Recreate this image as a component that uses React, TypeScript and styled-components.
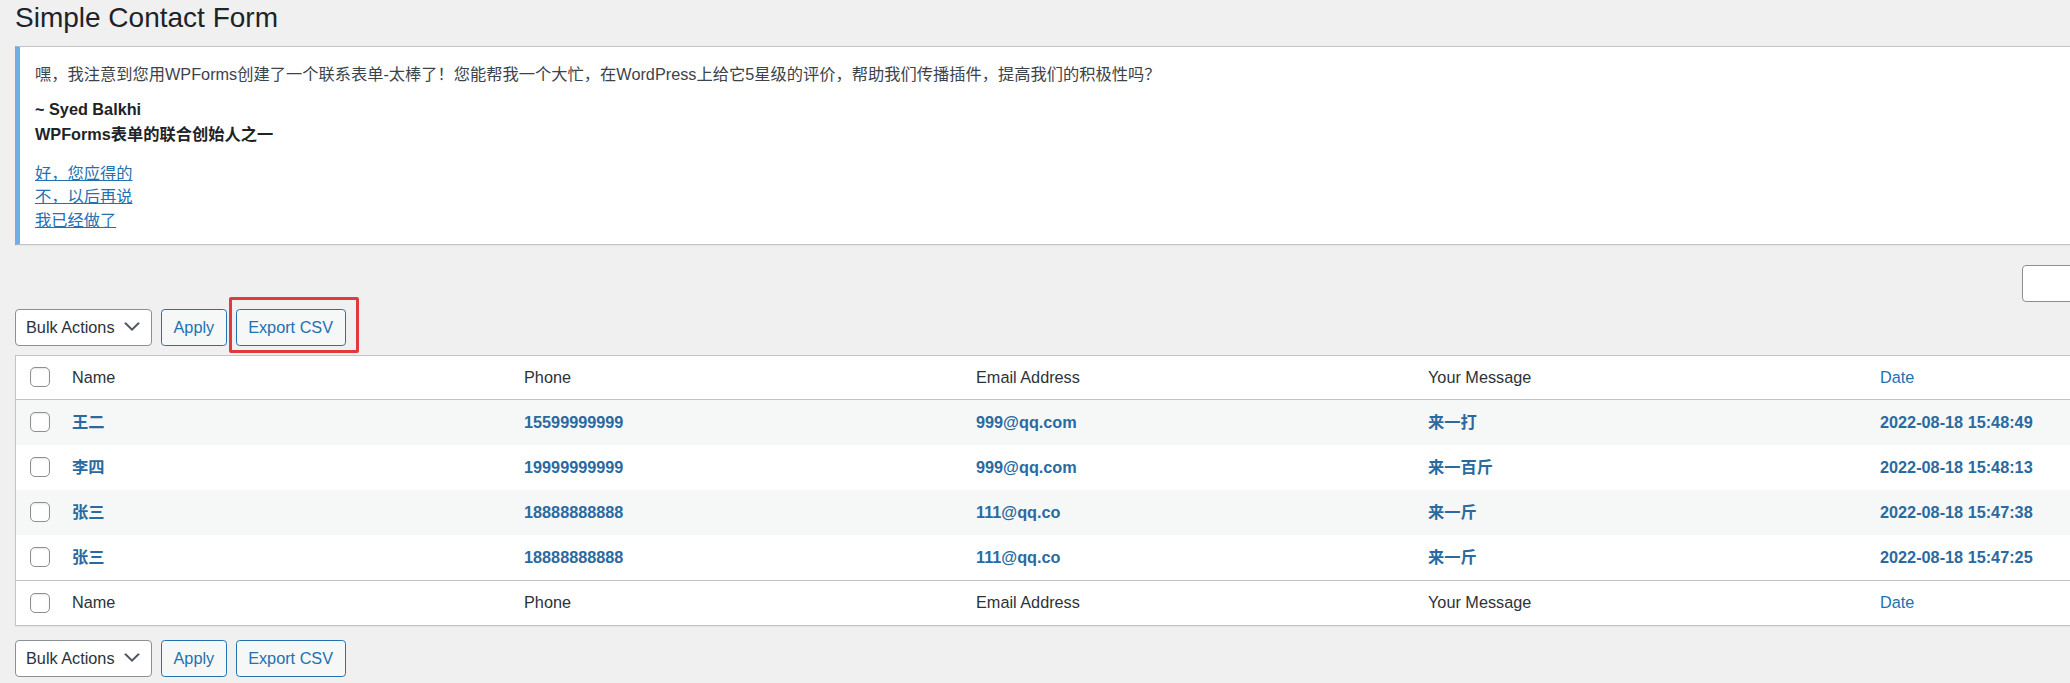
import React from "react";
import styled, { createGlobalStyle } from "styled-components";

const GlobalStyle = createGlobalStyle`
  html, body {
    margin: 0;
    padding: 0;
    overflow: hidden;
    background: #f0f0f1;
  }
  body {
    font-family: "Liberation Sans", "Noto Sans CJK SC", sans-serif;
    font-size: 16.25px;
    color: #3c434a;
  }
`;

const entries = [
  { name: "王二", phone: "15599999999", email: "999@qq.com", message: "来一打", date: "2022-08-18 15:48:49" },
  { name: "李四", phone: "19999999999", email: "999@qq.com", message: "来一百斤", date: "2022-08-18 15:48:13" },
  { name: "张三", phone: "18888888888", email: "111@qq.co", message: "来一斤", date: "2022-08-18 15:47:38" },
  { name: "张三", phone: "18888888888", email: "111@qq.co", message: "来一斤", date: "2022-08-18 15:47:25" },
];

const columns = ["Name", "Phone", "Email Address", "Your Message"];

const Wrap = styled.div`
  width: 2345px;
  padding-left: 15px;
`;

const Title = styled.h1`
  margin: 0;
  font-size: 28px;
  line-height: 36px;
  font-weight: 400;
  color: #1d2327;
`;

const Notice = styled.div`
  margin-top: 9.5px;
  padding: 0 15px;
  background: #fff;
  border: 1px solid #c3c4c7;
  border-left: 5px solid #72aee6;
  box-shadow: 0 1px 1px rgba(0, 0, 0, 0.04);
`;

const NoticeText = styled.p`
  margin: 15.5px 0 0;
  line-height: 25px;
`;

const Signature = styled.p`
  margin: 10px 0 0;
  line-height: 25px;
  font-weight: 600;
  color: #1d2327;
`;

const NoticeLinks = styled.div`
  margin: 14.75px 0 11.25px;
  line-height: 23.5px;
  a {
    display: block;
    width: fit-content;
    color: #2271b1;
    text-decoration: underline;
  }
`;

const SearchRow = styled.div`
  display: flex;
  justify-content: flex-end;
  margin-top: 20px;
`;

const SearchInput = styled.div`
  width: 338px;
  height: 37px;
  box-sizing: border-box;
  background: #fff;
  border: 1px solid #8c8f94;
  border-radius: 4px;
`;

const TableNav = styled.div<{ $top?: boolean }>`
  display: flex;
  align-items: center;
  gap: 9px;
  height: 37px;
  margin: ${({ $top }) => ($top ? "7px 0 9px" : "14px 0 0")};
`;

const Select = styled.div`
  display: flex;
  align-items: center;
  box-sizing: border-box;
  width: 137px;
  height: 37px;
  padding-left: 10px;
  background: #fff;
  border: 1px solid #8c8f94;
  border-radius: 4px;
  color: #2c3338;
  white-space: nowrap;
  svg {
    margin-left: auto;
    margin-right: 7px;
  }
`;

const Button = styled.button`
  box-sizing: border-box;
  height: 37px;
  padding: 0 11.5px;
  font: inherit;
  color: #2271b1;
  background: #f6f7f7;
  border: 1px solid #2271b1;
  border-radius: 3.75px;
  white-space: nowrap;
`;

const Highlight = styled.span`
  position: relative;
  display: inline-flex;
  &::after {
    content: "";
    position: absolute;
    top: -12px;
    left: -7px;
    right: -13px;
    bottom: -7px;
    border: 3px solid #e0393e;
    border-radius: 2px;
    pointer-events: none;
  }
`;

const Table = styled.table`
  width: 100%;
  table-layout: fixed;
  border-spacing: 0;
  background: #fff;
  border: 1px solid #c3c4c7;
  box-shadow: 0 1px 1px rgba(0, 0, 0, 0.04);
  tbody tr:nth-child(odd) {
    background: #f6f7f7;
  }
`;

const HeadCell = styled.th<{ $foot?: boolean; $sortable?: boolean }>`
  padding: ${({ $foot }) => ($foot ? "9.75px" : "9.25px")} 12.5px;
  line-height: 24.5px;
  text-align: left;
  font-weight: 400;
  color: ${({ $sortable }) => ($sortable ? "#2271b1" : "#2c3338")};
  border-top: ${({ $foot }) => ($foot ? "1px solid #c3c4c7" : "0")};
  border-bottom: ${({ $foot }) => ($foot ? "0" : "1px solid #c3c4c7")};
`;

const Cell = styled.td`
  padding: 10.25px 12.5px;
  line-height: 24.5px;
  font-weight: 600;
  color: #2a6aa0;
  white-space: nowrap;
`;

const CheckCell = styled.td<{ $head?: boolean; $foot?: boolean }>`
  padding: 0 0 0 14px;
  vertical-align: middle;
  border-top: ${({ $foot }) => ($foot ? "1px solid #c3c4c7" : "0")};
  border-bottom: ${({ $head }) => ($head ? "1px solid #c3c4c7" : "0")};
`;

const Checkbox = styled.span`
  display: block;
  width: 20px;
  height: 20px;
  box-sizing: border-box;
  background: #fff;
  border: 1px solid #8c8f94;
  border-radius: 5px;
  box-shadow: inset 0 1px 2px rgba(0, 0, 0, 0.1);
`;

const Chevron = () => (
  <svg width="24" height="24" viewBox="0 0 20 20" aria-hidden="true">
    <path d="M5 6l5 5 5-5 1.6 0.8-6.6 6.6-6.6-6.6 1.6-0.8z" fill="#50575e" />
  </svg>
);

const Actions = ({ top }: { top?: boolean }) => (
  <TableNav $top={top}>
    <Select>
      Bulk Actions
      <Chevron />
    </Select>
    <Button type="button">Apply</Button>
    {top ? (
      <Highlight>
        <Button type="button">Export CSV</Button>
      </Highlight>
    ) : (
      <Button type="button">Export CSV</Button>
    )}
  </TableNav>
);

const HeaderRow = ({ foot }: { foot?: boolean }) => (
  <tr>
    <CheckCell $head={!foot} $foot={foot}>
      <Checkbox />
    </CheckCell>
    {columns.map((c) => (
      <HeadCell key={c} $foot={foot}>
        {c}
      </HeadCell>
    ))}
    <HeadCell $foot={foot} $sortable>
      Date
    </HeadCell>
  </tr>
);

export default function App() {
  return (
    <>
      <GlobalStyle />
      <Wrap>
        <Title>Simple Contact Form</Title>
        <Notice>
          <NoticeText>
            嘿，我注意到您用WPForms创建了一个联系表单-太棒了！您能帮我一个大忙，在WordPress上给它5星级的评价，帮助我们传播插件，提高我们的积极性吗？
          </NoticeText>
          <Signature>
            ~ Syed Balkhi
            <br />
            WPForms表单的联合创始人之一
          </Signature>
          <NoticeLinks>
            <a href="#">好，您应得的</a>
            <a href="#">不，以后再说</a>
            <a href="#">我已经做了</a>
          </NoticeLinks>
        </Notice>

        <SearchRow>
          <SearchInput />
        </SearchRow>

        <Actions top />

        <Table>
          <colgroup>
            <col style={{ width: 43.5 }} />
            <col style={{ width: 452 }} />
            <col style={{ width: 452 }} />
            <col style={{ width: 452 }} />
            <col style={{ width: 452 }} />
            <col />
          </colgroup>
          <thead>
            <HeaderRow />
          </thead>
          <tbody>
            {entries.map((e, i) => (
              <tr key={i}>
                <CheckCell>
                  <Checkbox />
                </CheckCell>
                <Cell>{e.name}</Cell>
                <Cell>{e.phone}</Cell>
                <Cell>{e.email}</Cell>
                <Cell>{e.message}</Cell>
                <Cell>{e.date}</Cell>
              </tr>
            ))}
          </tbody>
          <tfoot>
            <HeaderRow foot />
          </tfoot>
        </Table>

        <Actions />
      </Wrap>
    </>
  );
}
